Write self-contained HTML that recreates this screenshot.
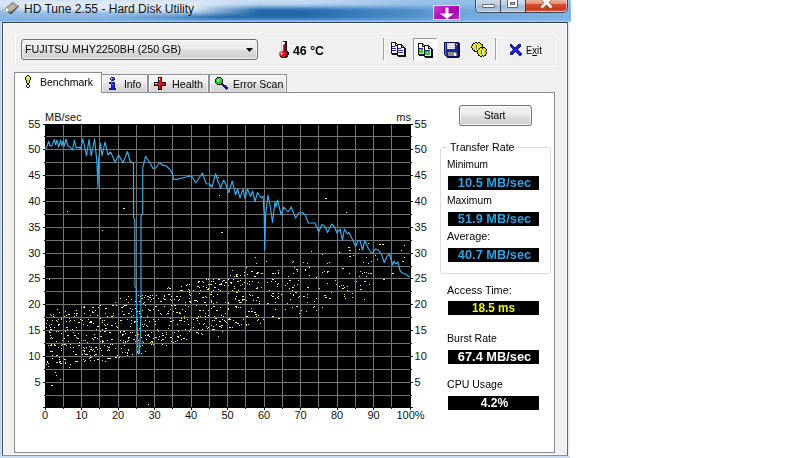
<!DOCTYPE html>
<html><head><meta charset="utf-8"><title>HD Tune 2.55 - Hard Disk Utility</title>
<style>
html,body{margin:0;padding:0;background:#fff;}
body{width:800px;height:458px;overflow:hidden;position:relative;font-family:"Liberation Sans",sans-serif;font-size:11px;color:#000;}
.abs,.t{position:absolute;}
.t{white-space:nowrap;line-height:1;transform-origin:0 0;}
#frame{left:0;top:0;width:571px;height:458px;background:linear-gradient(to right,#a9c4dc 0,#d6e8f8 1px,#d6e8f8 2px,#dfe9f6 3px,#dfe9f6 567px,#e4ebf8 568px,#e8eefa 569px,#f6f9fd 570px,#fff 571px);}
#titlebar{left:0;top:0;width:571px;height:22px;overflow:hidden;
 background:linear-gradient(to bottom,#c9dcf3 0px,#bdd5ef 4px,#7eaedc 6.5px,#2f74b5 9.5px,#1f66a8 12px,#2369ac 17px,#3f82c2 19px,#6da3d8 20.5px,#a8c8e8 21px,#a8c8e8 22px);}
#tb-r{left:300px;top:0;width:271px;height:21px;background:linear-gradient(to right,rgba(120,175,228,0) 0,rgba(120,175,228,.55) 110px,rgba(132,184,232,.8) 160px,rgba(140,190,236,.85) 271px);}
#tb-l{left:0;top:0;width:262px;height:17px;background:linear-gradient(to bottom,#d2e2f5 0,#dfeaf7 3px,#e1ebf8 9px,rgba(220,232,246,.9) 12px,rgba(200,220,242,.5) 14.5px,rgba(190,214,240,0) 17px);-webkit-mask-image:linear-gradient(to right,rgba(0,0,0,.8) 0,rgba(0,0,0,.85) 18px,#000 30px,#000 192px,rgba(0,0,0,.6) 215px,transparent 260px);}
#tb-l2{left:0;top:9px;width:225px;height:12px;background:linear-gradient(to bottom,rgba(150,190,232,0) 0,rgba(150,190,231,.9) 4.5px,#8ab7e4 8px,#82b1e1 11px,#80b0e0 12px);-webkit-mask-image:linear-gradient(to right,#000 0,#000 105px,rgba(0,0,0,.55) 170px,transparent 222px);}
#client{left:2px;top:22px;width:564px;height:432px;border:1px solid #3f4f63;border-top-color:#2b3c52;border-bottom-color:#8794a6;border-right-color:#5a6778;background:#f0f0f0;box-shadow:inset 0 0 0 1px #fbfcfd;}
#toolbar{left:15px;top:33px;width:539px;height:32px;border:1px solid #fbfbfb;border-radius:3px;box-shadow:inset 0 0 0 1px #ebebeb;}
#combo{left:21px;top:39px;width:235px;height:19px;border:1px solid #707070;border-radius:3px;background:linear-gradient(to bottom,#f2f2f2 0%,#ebebeb 48%,#dddddd 52%,#cfcfcf 100%);box-shadow:inset 0 0 0 1px rgba(255,255,255,.7);}
.sep{width:1px;background:#a0a0a0;box-shadow:1px 0 0 #fff;}
#panel{left:14px;top:92px;width:539px;height:359px;border:1px solid #898c95;background:#fff;}
.tab{top:74px;height:18px;border:1px solid #8e9097;border-bottom:none;background:linear-gradient(to bottom,#f4f4f4 0%,#ededed 48%,#e0e0e0 52%,#d4d4d4 100%);box-sizing:border-box;box-shadow:inset 1px 1px 0 rgba(255,255,255,.85),inset -1px 0 0 rgba(255,255,255,.6);}
#tab0{left:14px;top:72px;width:88px;height:21px;border:1px solid #898c95;border-bottom:none;background:#fff;box-sizing:border-box;}
.box{left:448px;width:91px;height:14px;background:#000;}
.val{font-weight:bold;font-size:13px;left:448px;width:91px;text-align:center;}
#start{left:459px;top:105px;width:71px;height:19px;border:1px solid #707070;border-radius:3px;background:linear-gradient(to bottom,#f2f2f2 0%,#ebebeb 48%,#dddddd 52%,#cfcfcf 100%);box-shadow:inset 0 0 0 1px rgba(255,255,255,.8);}
#group{left:440px;top:147px;width:109px;height:125px;border:1px solid #d9dde1;border-radius:3px;box-shadow:0 0 0 1px rgba(255,255,255,.6);}
</style></head><body>
<div id="frame" class="abs"></div>
<div id="titlebar" class="abs"></div>
<div id="tb-r" class="abs"></div><div id="tb-l" class="abs"></div><div id="tb-l2" class="abs"></div>
<div class="abs" style="left:0;top:456px;width:570px;height:2px;background:linear-gradient(to bottom,#d3e0f2,#c6d6ec)"></div>
<div id="client" class="abs"></div>

<!-- title -->
<svg class="abs" style="left:3px;top:1px" width="17" height="15" viewBox="0 0 17 15"><path d="M1 8.500L9.500 1 16 5.500 8 13.500z" fill="#4a5058"/><path d="M1.500 8L9.500 1.500 15 5.300 7.500 11.500z" fill="#a8a090"/><path d="M5 7.500L9.500 3.500 12.500 5.500 8 9.500z" fill="#c4b8a4"/><path d="M1.500 8.500l2.500-1.500 2 2.500-2 1.500z" fill="#f4f6f8"/></svg>
<span class="t" style="left:24px;top:3px;font-size:12px;color:#111">HD Tune 2.55 - Hard Disk Utility</span>

<!-- caption buttons -->
<div class="abs" style="left:433px;top:5px;width:27px;height:15px;background:linear-gradient(135deg,#d040d0 0%,#b010b4 45%,#a008a8 70%,#c030c4 100%);border:1px solid #f0d8f4;box-sizing:border-box;"></div>
<svg class="abs" style="left:438px;top:6px" width="18" height="13" viewBox="0 0 18 13"><path d="M7.500 1.500h3v6h5.500L9 13 2 7.500h5.500z" fill="#fff"/></svg>
<svg class="abs" style="left:474px;top:0" width="96" height="15" viewBox="0 0 96 15">
 <defs>
  <linearGradient id="gb" x1="0" y1="0" x2="0" y2="1"><stop offset="0" stop-color="#d3deed"/><stop offset=".45" stop-color="#b9cadf"/><stop offset=".5" stop-color="#a3b8d3"/><stop offset="1" stop-color="#b4c8e0"/></linearGradient>
  <linearGradient id="gr" x1="0" y1="0" x2="0" y2="1"><stop offset="0" stop-color="#f0baa9"/><stop offset=".36" stop-color="#e2917b"/><stop offset=".42" stop-color="#d2502f"/><stop offset=".8" stop-color="#c43a1c"/><stop offset="1" stop-color="#e08664"/></linearGradient>
 </defs>
 <path d="M1.500 -1V8.500a4 4 0 0 0 4 4H89.500a4 4 0 0 0 4-4V-1z" fill="url(#gb)" stroke="#3a4658" stroke-width="1"/>
 <path d="M51.500 -1V12H89.500a3.500 3.500 0 0 0 3.500-3.500V-1z" fill="url(#gr)"/>
 <path d="M2.500 0V8.500a3 3 0 0 0 3 3H89.500a3 3 0 0 0 3-3V0" fill="none" stroke="rgba(255,255,255,.45)" stroke-width="1"/>
 <path d="M26.500 0V12.500M51.500 0V12.500" stroke="#3a4658" stroke-width="1"/>
 <rect x="8.500" y="4.500" width="12" height="3" rx=".5" fill="#fff" stroke="#5a6a82" stroke-width="1"/>
 <path d="M33.500 -1h10v8.500h-10z" fill="#fff" stroke="#5a6a82" stroke-width="1"/><rect x="36.500" y="2.500" width="4" height="2" fill="#9fb3cf" stroke="#5a6a82" stroke-width="1"/>
 <path d="M67.500 -2.500l10 10M77.500 -2.500l-10 10" stroke="#8a3020" stroke-width="4.200" stroke-linecap="butt" opacity=".55"/>
 <path d="M67.500 -2.500l10 10M77.500 -2.500l-10 10" stroke="#fff" stroke-width="2.800" stroke-linecap="butt"/>
</svg>

<!-- toolbar -->
<div id="toolbar" class="abs"></div>
<div id="combo" class="abs"></div>
<span class="t" style="left:25px;top:44px;font-size:11px;transform:scaleX(.975)">FUJITSU MHY2250BH (250 GB)</span>
<svg class="abs" style="left:246px;top:48px" width="7" height="4" viewBox="0 0 7 4"><path d="M0 0h7L3.5 4z" fill="#111"/></svg>
<!-- thermometer -->
<svg class="abs" style="left:279px;top:41px" width="10" height="17" viewBox="0 0 10 17" shape-rendering="crispEdges"><path d="M3 0h1v1h-1zM2 1h1v1h-1zM2 2h1v1h-1zM2 3h1v1h-1zM2 4h1v1h-1zM2 5h1v1h-1zM2 6h1v1h-1zM2 7h1v1h-1zM2 8h1v1h-1zM2 9h1v1h-1z" fill="#c8c8c8"/><path d="M4 0h4v1h-4zM6 1h2v1h-2zM6 2h2v1h-2zM6 3h2v1h-2zM6 4h2v1h-2zM6 5h2v1h-2zM6 6h2v1h-2zM6 7h2v1h-2zM6 8h2v1h-2zM6 9h2v1h-2zM7 10h2v1h-2zM8 11h2v1h-2zM8 12h2v1h-2zM8 13h2v1h-2zM8 14h1v1h-1zM1 15h1v1h-1zM7 15h2v1h-2zM2 16h6v1h-6z" fill="#101018"/><path d="M3 1h2v1h-2zM3 2h2v1h-2zM3 3h1v1h-1zM3 4h1v1h-1zM3 5h1v1h-1zM3 6h1v1h-1zM3 7h1v1h-1zM3 8h1v1h-1zM2 12h2v1h-2zM2 13h1v1h-1z" fill="#ffffff"/><path d="M5 1h1v1h-1zM5 2h1v1h-1z" fill="#f4f4f4"/><path d="M4 3h1v1h-1zM3 9h1v1h-1zM2 10h1v1h-1zM1 11h1v1h-1z" fill="#f8b0b0"/><path d="M5 3h1v1h-1zM4 4h1v1h-1zM4 5h1v1h-1zM4 6h1v1h-1zM4 7h1v1h-1zM4 8h1v1h-1zM4 9h1v1h-1zM3 10h2v1h-2zM2 11h5v1h-5zM1 12h1v1h-1zM4 12h3v1h-3zM1 13h1v1h-1zM3 13h4v1h-4zM1 14h5v1h-5zM3 15h2v1h-2z" fill="#e01c2c"/><path d="M5 4h1v1h-1zM5 5h1v1h-1zM5 6h1v1h-1zM5 7h1v1h-1zM5 8h1v1h-1zM5 9h1v1h-1zM5 10h2v1h-2zM7 11h1v1h-1zM7 12h1v1h-1zM7 13h1v1h-1zM6 14h2v1h-2zM2 15h1v1h-1zM5 15h2v1h-2z" fill="#a00c18"/><path d="M1 10h1v1h-1zM0 11h1v1h-1zM0 12h1v1h-1zM0 13h1v1h-1zM0 14h1v1h-1z" fill="#8c8c8c"/></svg>
<span class="t" style="left:293px;top:45px;font-size:12px;font-weight:bold;transform:scaleX(1.03)">46 °C</span>
<div class="abs sep" style="left:383px;top:38px;height:22px"></div>
<!-- icons -->
<svg class="abs" style="left:391px;top:42px" width="16" height="15" viewBox="0 0 16 15" shape-rendering="crispEdges"><path d="M0 0h5v1h-5zM0 1h1v1h-1zM4 1h2v1h-2zM0 2h1v1h-1zM4 2h1v1h-1zM6 2h5v1h-5zM0 3h1v1h-1zM4 3h3v1h-3zM10 3h2v1h-2zM0 4h1v1h-1zM6 4h1v1h-1zM10 4h1v1h-1zM12 4h1v1h-1zM0 5h1v1h-1zM6 5h1v1h-1zM10 5h4v1h-4zM0 6h1v1h-1zM6 6h1v1h-1zM13 6h2v1h-2zM0 7h1v1h-1zM6 7h1v1h-1zM13 7h2v1h-2zM0 8h1v1h-1zM6 8h1v1h-1zM13 8h2v1h-2zM0 9h1v1h-1zM6 9h1v1h-1zM13 9h2v1h-2zM0 10h1v1h-1zM6 10h1v1h-1zM13 10h2v1h-2zM0 11h7v1h-7zM13 11h2v1h-2zM1 12h6v1h-6zM13 12h2v1h-2zM6 13h9v1h-9zM7 14h8v1h-8z" fill="#101018"/><path d="M1 1h3v1h-3zM1 2h3v1h-3zM5 2h1v1h-1zM1 3h3v1h-3zM7 3h3v1h-3zM4 4h2v1h-2zM7 4h3v1h-3zM11 4h1v1h-1zM1 5h5v1h-5zM7 5h3v1h-3zM5 6h1v1h-1zM10 6h3v1h-3zM1 7h5v1h-5zM7 7h6v1h-6zM5 8h1v1h-1zM12 8h1v1h-1zM1 9h5v1h-5zM7 9h6v1h-6zM1 10h5v1h-5zM12 10h1v1h-1zM7 11h6v1h-6zM7 12h6v1h-6z" fill="#ffffff"/><path d="M1 4h3v1h-3zM1 6h4v1h-4zM7 6h3v1h-3zM1 8h4v1h-4zM7 8h5v1h-5zM7 10h5v1h-5z" fill="#2a2ad0"/></svg>
<div class="abs" style="left:413px;top:38px;width:22px;height:21px;background:#f8f8f8;border-top:1px solid #9c9c9c;border-left:1px solid #9c9c9c;border-right:1px solid #fff;border-bottom:1px solid #fff;"></div>
<svg class="abs" style="left:418px;top:43px" width="16" height="15" viewBox="0 0 16 15" shape-rendering="crispEdges"><path d="M0 0h5v1h-5zM0 1h1v1h-1zM4 1h2v1h-2zM0 2h1v1h-1zM4 2h1v1h-1zM6 2h5v1h-5zM0 3h1v1h-1zM4 3h3v1h-3zM10 3h2v1h-2zM0 4h1v1h-1zM6 4h1v1h-1zM10 4h1v1h-1zM12 4h1v1h-1zM0 5h1v1h-1zM6 5h1v1h-1zM10 5h4v1h-4zM0 6h1v1h-1zM6 6h1v1h-1zM13 6h2v1h-2zM0 7h1v1h-1zM6 7h1v1h-1zM13 7h2v1h-2zM0 8h1v1h-1zM6 8h1v1h-1zM13 8h2v1h-2zM0 9h1v1h-1zM6 9h1v1h-1zM13 9h2v1h-2zM0 10h1v1h-1zM6 10h1v1h-1zM13 10h2v1h-2zM0 11h7v1h-7zM13 11h2v1h-2zM1 12h6v1h-6zM13 12h2v1h-2zM6 13h9v1h-9zM7 14h8v1h-8z" fill="#101018"/><path d="M1 1h3v1h-3zM1 2h3v1h-3zM5 2h1v1h-1zM1 3h3v1h-3zM7 3h3v1h-3zM1 4h5v1h-5zM7 4h3v1h-3zM11 4h1v1h-1zM5 5h1v1h-1zM7 5h3v1h-3zM5 6h1v1h-1zM7 6h6v1h-6zM5 7h1v1h-1zM12 7h1v1h-1zM5 8h1v1h-1zM12 8h1v1h-1zM5 9h1v1h-1zM12 9h1v1h-1zM1 10h5v1h-5zM12 10h1v1h-1zM12 11h1v1h-1zM7 12h6v1h-6z" fill="#ffffff"/><path d="M1 5h4v1h-4zM7 7h5v1h-5z" fill="#1a2a9c"/><path d="M1 6h4v1h-4zM1 7h1v1h-1zM3 7h2v1h-2zM1 8h4v1h-4zM7 8h5v1h-5zM1 9h4v1h-4zM7 9h2v1h-2zM10 9h2v1h-2zM7 10h5v1h-5zM7 11h5v1h-5z" fill="#30c838"/><path d="M2 7h1v1h-1zM9 9h1v1h-1z" fill="#a8e860"/></svg>
<svg class="abs" style="left:444px;top:42px" width="16" height="16" viewBox="0 0 16 16" shape-rendering="crispEdges"><path d="M0 0h15v1h-15zM0 1h1v1h-1zM14 1h1v1h-1zM0 2h1v1h-1zM14 2h1v1h-1zM0 3h1v1h-1zM14 3h1v1h-1zM0 4h1v1h-1zM14 4h1v1h-1zM0 5h1v1h-1zM14 5h1v1h-1zM0 6h1v1h-1zM14 6h1v1h-1zM0 7h1v1h-1zM14 7h1v1h-1zM0 8h1v1h-1zM14 8h1v1h-1zM0 9h1v1h-1zM14 9h1v1h-1zM0 10h1v1h-1zM14 10h1v1h-1zM0 11h1v1h-1zM14 11h1v1h-1zM0 12h1v1h-1zM14 12h1v1h-1zM1 13h1v1h-1zM14 13h1v1h-1zM2 14h13v1h-13z" fill="#101050"/><path d="M1 1h1v1h-1zM1 2h1v1h-1zM1 3h1v1h-1zM1 4h1v1h-1zM1 5h1v1h-1zM1 6h1v1h-1zM1 7h1v1h-1zM1 8h1v1h-1zM1 9h1v1h-1zM1 10h1v1h-1zM1 11h1v1h-1zM1 12h1v1h-1z" fill="#4a78e0"/><path d="M2 1h1v1h-1zM11 1h3v1h-3zM2 2h1v1h-1zM11 2h1v1h-1zM13 2h1v1h-1zM2 3h1v1h-1zM11 3h3v1h-3zM2 4h1v1h-1zM11 4h3v1h-3zM2 5h1v1h-1zM11 5h3v1h-3zM2 6h1v1h-1zM11 6h3v1h-3zM2 7h12v1h-12zM2 8h12v1h-12zM2 9h12v1h-12zM2 10h2v1h-2zM12 10h2v1h-2zM2 11h2v1h-2zM13 11h1v1h-1zM2 12h2v1h-2zM13 12h1v1h-1zM2 13h2v1h-2zM13 13h1v1h-1z" fill="#1a2a9c"/><path d="M3 1h8v1h-8zM3 2h1v1h-1zM10 2h1v1h-1zM3 3h8v1h-8zM3 4h1v1h-1zM10 4h1v1h-1zM3 5h8v1h-8zM3 6h1v1h-1zM10 6h1v1h-1z" fill="#c8c8c8"/><path d="M15 1h1v1h-1zM15 2h1v1h-1zM15 3h1v1h-1zM15 4h1v1h-1zM15 5h1v1h-1zM15 6h1v1h-1zM15 7h1v1h-1zM15 8h1v1h-1zM15 9h1v1h-1zM15 10h1v1h-1zM15 11h1v1h-1zM15 12h1v1h-1zM15 13h1v1h-1zM15 14h1v1h-1zM3 15h12v1h-12z" fill="#101018"/><path d="M4 2h6v1h-6zM12 2h1v1h-1zM4 4h6v1h-6zM4 6h6v1h-6zM10 11h2v1h-2zM10 12h2v1h-2zM10 13h2v1h-2z" fill="#ffffff"/><path d="M4 10h8v1h-8zM4 11h6v1h-6zM12 11h1v1h-1zM4 12h6v1h-6zM12 12h1v1h-1zM4 13h6v1h-6zM12 13h1v1h-1z" fill="#8c8c8c"/></svg>
<svg class="abs" style="left:471px;top:42px" width="16" height="15" viewBox="0 0 16 15" shape-rendering="crispEdges"><path d="M4 0h2v1h-2zM7 0h2v1h-2zM2 1h2v1h-2zM6 1h1v1h-1zM9 1h1v1h-1zM1 2h1v1h-1zM10 2h2v1h-2zM1 3h1v1h-1zM11 3h1v1h-1zM0 4h1v1h-1zM11 4h1v1h-1zM0 5h1v1h-1zM9 5h5v1h-5zM1 6h1v1h-1zM8 6h1v1h-1zM11 6h1v1h-1zM14 6h1v1h-1zM1 7h1v1h-1zM7 7h1v1h-1zM15 7h1v1h-1zM2 8h2v1h-2zM6 8h1v1h-1zM15 8h1v1h-1zM3 9h4v1h-4zM14 9h1v1h-1zM6 10h1v1h-1zM15 10h1v1h-1zM6 11h1v1h-1zM15 11h1v1h-1zM7 12h1v1h-1zM14 12h1v1h-1zM7 13h2v1h-2zM11 13h1v1h-1zM13 13h2v1h-2zM9 14h2v1h-2zM12 14h1v1h-1z" fill="#101018"/><path d="M4 1h2v1h-2zM7 1h2v1h-2zM2 2h1v1h-1zM4 2h6v1h-6zM2 3h3v1h-3zM7 3h4v1h-4zM1 4h1v1h-1zM3 4h2v1h-2zM7 4h4v1h-4zM1 5h4v1h-4zM7 5h2v1h-2zM2 6h3v1h-3zM7 6h1v1h-1zM9 6h2v1h-2zM12 6h2v1h-2zM2 7h5v1h-5zM8 7h1v1h-1zM10 7h5v1h-5zM4 8h2v1h-2zM7 8h3v1h-3zM12 8h3v1h-3zM7 9h1v1h-1zM9 9h1v1h-1zM12 9h2v1h-2zM7 10h3v1h-3zM12 10h3v1h-3zM7 11h3v1h-3zM12 11h3v1h-3zM8 12h6v1h-6zM9 13h2v1h-2zM12 13h1v1h-1z" fill="#e4e020"/><path d="M3 2h1v1h-1zM2 4h1v1h-1zM9 7h1v1h-1zM8 9h1v1h-1z" fill="#f6f680"/><path d="M5 3h1v1h-1zM5 4h1v1h-1zM5 5h1v1h-1zM5 6h1v1h-1zM10 8h1v1h-1zM10 9h1v1h-1zM10 10h1v1h-1zM10 11h1v1h-1z" fill="#606060"/><path d="M6 3h1v1h-1zM6 4h1v1h-1zM6 5h1v1h-1zM6 6h1v1h-1zM11 8h1v1h-1zM11 9h1v1h-1zM11 10h1v1h-1zM11 11h1v1h-1z" fill="#f4f4f4"/></svg>
<div class="abs sep" style="left:495px;top:38px;height:22px"></div>
<svg class="abs" style="left:510px;top:44px" width="12" height="12" viewBox="0 0 12 12" shape-rendering="crispEdges"><path d="M0 0h2v1h-2zM8 0h3v1h-3zM0 1h1v1h-1zM2 1h1v1h-1zM7 1h1v1h-1zM10 1h1v1h-1zM0 2h1v1h-1zM3 2h1v1h-1zM6 2h1v1h-1zM10 2h1v1h-1zM1 3h1v1h-1zM4 3h2v1h-2zM9 3h1v1h-1zM2 4h1v1h-1zM8 4h1v1h-1zM3 5h1v1h-1zM7 5h1v1h-1zM2 6h1v1h-1zM8 6h1v1h-1zM1 7h1v1h-1zM5 7h1v1h-1zM9 7h1v1h-1zM0 8h1v1h-1zM4 8h1v1h-1zM6 8h1v1h-1zM10 8h1v1h-1zM0 9h1v1h-1zM3 9h1v1h-1zM7 9h1v1h-1zM11 9h1v1h-1zM0 10h3v1h-3zM8 10h1v1h-1zM11 10h1v1h-1zM9 11h2v1h-2z" fill="#1c1c70"/><path d="M1 1h1v1h-1zM8 1h2v1h-2zM1 2h2v1h-2zM7 2h3v1h-3zM2 3h2v1h-2zM6 3h3v1h-3zM3 4h5v1h-5zM4 5h3v1h-3zM3 6h5v1h-5zM2 7h3v1h-3zM6 7h3v1h-3zM1 8h3v1h-3zM7 8h3v1h-3zM1 9h2v1h-2zM8 9h3v1h-3zM9 10h2v1h-2z" fill="#2020e8"/></svg>
<span class="t" style="left:526px;top:45px;font-size:11px;transform:scaleX(.86)">E<u>x</u>it</span>

<!-- tabs -->
<div id="panel" class="abs"></div>
<div class="abs tab" style="left:101px;width:47px"></div>
<div class="abs tab" style="left:148px;width:61px"></div>
<div class="abs tab" style="left:209px;width:78px"></div>
<div id="tab0" class="abs"></div>
<svg class="abs" style="left:25px;top:75px" width="6" height="13" viewBox="0 0 6 13" shape-rendering="crispEdges"><path d="M2 0h2v1h-2zM1 1h1v1h-1zM4 1h1v1h-1zM0 2h1v1h-1zM5 2h1v1h-1zM0 3h1v1h-1zM5 3h1v1h-1zM0 4h1v1h-1zM5 4h1v1h-1zM1 5h1v1h-1zM4 5h1v1h-1zM1 6h1v1h-1zM4 6h1v1h-1zM1 7h1v1h-1zM4 7h1v1h-1zM2 8h2v1h-2zM2 9h2v1h-2zM1 10h1v1h-1zM4 10h1v1h-1zM1 11h1v1h-1zM4 11h1v1h-1zM2 12h2v1h-2z" fill="#101018"/><path d="M2 1h1v1h-1zM2 2h1v1h-1zM2 3h1v1h-1zM2 4h1v1h-1z" fill="#f6f680"/><path d="M3 1h1v1h-1zM1 2h1v1h-1zM3 2h2v1h-2zM1 3h1v1h-1zM3 3h2v1h-2zM1 4h1v1h-1zM3 4h2v1h-2zM2 5h2v1h-2zM2 6h2v1h-2zM2 7h2v1h-2z" fill="#e4e020"/><path d="M2 10h2v1h-2zM2 11h2v1h-2z" fill="#ffffff"/></svg>
<span class="t" style="left:40px;top:77px;transform:scaleX(.953)">Benchmark</span>
<svg class="abs" style="left:109px;top:77px" width="7" height="13" viewBox="0 0 7 13" shape-rendering="crispEdges"><path d="M2 0h3v1h-3zM1 1h1v1h-1zM5 1h1v1h-1zM1 2h1v1h-1zM5 2h1v1h-1zM2 3h3v1h-3zM0 5h6v1h-6zM0 6h2v1h-2zM5 6h1v1h-1zM2 7h1v1h-1zM5 7h1v1h-1zM2 8h1v1h-1zM5 8h1v1h-1zM2 9h1v1h-1zM5 9h1v1h-1zM2 10h1v1h-1zM5 10h1v1h-1zM0 11h3v1h-3zM5 11h2v1h-2zM0 12h7v1h-7z" fill="#1c1c70"/><path d="M2 1h1v1h-1z" fill="#d8dcf8"/><path d="M3 1h1v1h-1zM2 2h1v1h-1zM2 6h1v1h-1zM3 7h1v1h-1z" fill="#7080f0"/><path d="M4 1h1v1h-1zM3 2h2v1h-2zM3 6h2v1h-2zM4 7h1v1h-1zM3 8h2v1h-2zM3 9h2v1h-2zM3 10h2v1h-2zM3 11h2v1h-2z" fill="#2020e8"/></svg>
<span class="t" style="left:124px;top:79px;transform:scaleX(.94)">Info</span>
<svg class="abs" style="left:154px;top:77px" width="12" height="13" viewBox="0 0 12 13" shape-rendering="crispEdges"><path d="M4 0h4v1h-4zM4 1h1v1h-1zM7 1h1v1h-1zM4 2h1v1h-1zM7 2h1v1h-1zM4 3h1v1h-1zM7 3h1v1h-1zM4 4h1v1h-1zM7 4h1v1h-1zM0 5h5v1h-5zM7 5h5v1h-5zM0 6h1v1h-1zM11 6h1v1h-1zM0 7h1v1h-1zM11 7h1v1h-1zM0 8h5v1h-5zM7 8h5v1h-5zM4 9h1v1h-1zM7 9h1v1h-1zM4 10h1v1h-1zM7 10h1v1h-1zM4 11h1v1h-1zM7 11h1v1h-1zM4 12h4v1h-4z" fill="#101018"/><path d="M5 1h1v1h-1zM5 2h1v1h-1zM1 6h2v1h-2z" fill="#ffffff"/><path d="M6 1h1v1h-1zM6 2h1v1h-1zM5 3h2v1h-2zM5 4h2v1h-2zM5 5h2v1h-2zM3 6h8v1h-8zM1 7h8v1h-8zM5 8h1v1h-1zM5 9h1v1h-1zM5 10h1v1h-1zM5 11h1v1h-1z" fill="#e01c2c"/><path d="M9 7h2v1h-2zM6 8h1v1h-1zM6 9h1v1h-1zM6 10h1v1h-1zM6 11h1v1h-1z" fill="#a00c18"/></svg>
<span class="t" style="left:172px;top:79px;transform:scaleX(.975)">Health</span>
<svg class="abs" style="left:215px;top:77px" width="13" height="13" viewBox="0 0 13 13" shape-rendering="crispEdges"><path d="M2 0h4v1h-4zM1 1h1v1h-1zM6 1h1v1h-1zM0 2h1v1h-1zM7 2h1v1h-1zM0 3h1v1h-1zM7 3h1v1h-1zM0 4h1v1h-1zM7 4h1v1h-1zM0 5h1v1h-1zM7 5h1v1h-1zM1 6h1v1h-1zM6 6h1v1h-1zM2 7h4v1h-4z" fill="#101018"/><path d="M2 1h4v1h-4zM1 2h2v1h-2zM5 2h2v1h-2zM1 3h1v1h-1zM5 3h2v1h-2zM1 4h2v1h-2zM4 4h3v1h-3zM1 5h6v1h-6zM2 6h4v1h-4z" fill="#30c838"/><path d="M3 2h2v1h-2zM2 3h3v1h-3zM3 4h1v1h-1z" fill="#a8e860"/><path d="M7 6h1v1h-1zM6 7h3v1h-3zM7 8h4v1h-4zM8 9h4v1h-4zM9 10h4v1h-4zM10 11h3v1h-3zM11 12h1v1h-1z" fill="#1c1c70"/></svg>
<span class="t" style="left:233px;top:79px;transform:scaleX(.957)">Error Scan</span>

<svg class="chart" width="440" height="330" viewBox="0 100 440 330" style="position:absolute;left:0;top:100px" shape-rendering="crispEdges">
<rect x="45" y="124" width="366" height="284" fill="#000"/>
<path d="M164 306h1v1h-1zM179 312h1v1h-1zM59 362h1v1h-1zM347 290h1v1h-1zM256 263h1v1h-1zM151 341h2v1h-2zM158 339h1v1h-1zM181 339h1v1h-1zM67 329h1v1h-1zM259 303h1v1h-1zM135 321h1v1h-1zM151 344h1v1h-1zM198 329h1v1h-1zM160 313h1v1h-1zM257 272h2v1h-2zM288 276h1v1h-1zM186 339h1v1h-1zM88 319h1v1h-1zM93 339h1v1h-1zM209 284h2v1h-2zM147 326h1v1h-1zM101 350h1v1h-1zM131 320h1v1h-1zM198 304h1v1h-1zM234 286h1v1h-1zM337 282h1v1h-1zM83 359h1v1h-1zM105 356h1v1h-1zM46 364h1v1h-1zM100 341h1v1h-1zM178 291h1v1h-1zM222 325h1v1h-1zM171 296h1v1h-1zM99 359h1v1h-1zM238 278h1v1h-1zM179 299h1v1h-1zM240 307h1v1h-1zM316 277h1v1h-1zM175 341h1v1h-1zM209 277h1v1h-1zM126 343h1v1h-1zM221 283h1v1h-1zM76 313h2v1h-2zM220 290h1v1h-1zM167 291h1v1h-1zM108 349h1v1h-1zM99 306h1v1h-1zM246 325h1v1h-1zM238 300h1v1h-1zM123 342h1v1h-1zM133 339h2v1h-2zM213 281h1v1h-1zM199 310h2v1h-2zM52 358h1v1h-1zM47 362h1v1h-1zM249 294h1v1h-1zM84 350h1v1h-1zM231 283h1v1h-1zM269 290h1v1h-1zM240 275h1v1h-1zM352 297h1v1h-1zM133 315h1v1h-1zM102 320h1v1h-1zM223 280h2v1h-2zM104 331h2v1h-2zM162 344h1v1h-1zM248 324h1v1h-1zM232 270h1v1h-1zM84 361h1v1h-1zM93 312h1v1h-1zM344 294h1v1h-1zM301 310h1v1h-1zM72 329h1v1h-1zM358 253h1v1h-1zM211 301h1v1h-1zM93 349h1v1h-1zM85 360h1v1h-1zM157 329h1v1h-1zM228 308h1v1h-1zM51 337h1v1h-1zM115 302h1v1h-1zM203 286h1v1h-1zM189 298h1v1h-1zM278 298h1v1h-1zM65 363h1v1h-1zM105 313h1v1h-1zM148 334h1v1h-1zM208 279h2v1h-2zM135 335h2v1h-2zM185 311h1v1h-1zM119 357h1v1h-1zM191 336h1v1h-1zM157 317h1v1h-1zM165 337h1v1h-1zM61 318h1v1h-1zM342 278h2v1h-2zM230 282h2v1h-2zM299 313h1v1h-1zM94 355h1v1h-1zM275 281h1v1h-1zM224 285h1v1h-1zM241 324h1v1h-1zM314 306h1v1h-1zM120 298h1v1h-1zM226 304h1v1h-1zM271 317h1v1h-1zM99 319h1v1h-1zM50 351h1v1h-1zM292 287h2v1h-2zM89 351h1v1h-1zM52 320h1v1h-1zM144 297h1v1h-1zM122 352h1v1h-1zM94 334h1v1h-1zM130 326h1v1h-1zM225 313h1v1h-1zM97 343h1v1h-1zM89 322h2v1h-2zM181 286h1v1h-1zM202 334h1v1h-1zM83 347h1v1h-1zM142 341h1v1h-1zM182 290h1v1h-1zM246 324h1v1h-1zM150 295h1v1h-1zM171 300h2v1h-2zM285 285h1v1h-1zM105 308h1v1h-1zM227 276h1v1h-1zM96 356h2v1h-2zM170 330h2v1h-2zM196 305h1v1h-1zM183 338h2v1h-2zM91 322h1v1h-1zM360 285h1v1h-1zM208 284h1v1h-1zM364 299h1v1h-1zM218 336h1v1h-1zM188 289h1v1h-1zM136 347h1v1h-1zM236 274h2v1h-2zM247 283h1v1h-1zM130 317h2v1h-2zM137 311h1v1h-1zM86 335h1v1h-1zM127 355h1v1h-1zM156 295h1v1h-1zM219 321h2v1h-2zM158 319h1v1h-1zM139 301h2v1h-2zM128 338h1v1h-1zM118 314h1v1h-1zM230 275h1v1h-1zM130 308h1v1h-1zM153 319h1v1h-1zM198 282h1v1h-1zM99 348h2v1h-2zM64 344h2v1h-2zM113 313h1v1h-1zM184 321h1v1h-1zM107 346h1v1h-1zM91 347h1v1h-1zM176 296h2v1h-2zM218 279h2v1h-2zM116 305h1v1h-1zM60 363h2v1h-2zM169 291h2v1h-2zM307 297h1v1h-1zM47 320h1v1h-1zM54 344h1v1h-1zM187 319h1v1h-1zM112 316h1v1h-1zM267 303h1v1h-1zM74 320h1v1h-1zM136 352h2v1h-2zM76 337h1v1h-1zM131 320h1v1h-1zM90 349h2v1h-2zM252 281h1v1h-1zM135 301h1v1h-1zM257 297h2v1h-2zM130 317h2v1h-2zM219 284h2v1h-2zM153 338h1v1h-1zM140 296h1v1h-1zM272 296h2v1h-2zM97 349h1v1h-1zM120 340h1v1h-1zM293 295h1v1h-1zM246 316h2v1h-2zM190 302h1v1h-1zM299 296h1v1h-1zM158 331h1v1h-1zM198 281h2v1h-2zM178 300h1v1h-1zM105 328h2v1h-2zM78 345h2v1h-2zM149 297h2v1h-2zM85 317h1v1h-1zM92 307h2v1h-2zM222 281h1v1h-1zM104 345h1v1h-1zM193 290h1v1h-1zM191 315h1v1h-1zM90 321h2v1h-2zM59 361h1v1h-1zM264 285h1v1h-1zM258 282h1v1h-1zM209 334h1v1h-1zM131 311h1v1h-1zM213 306h2v1h-2zM203 310h1v1h-1zM232 290h1v1h-1zM65 344h1v1h-1zM116 326h1v1h-1zM106 308h1v1h-1zM69 321h1v1h-1zM146 339h1v1h-1zM229 318h1v1h-1zM162 333h1v1h-1zM104 320h1v1h-1zM332 278h1v1h-1zM278 270h1v1h-1zM368 243h1v1h-1zM275 273h1v1h-1zM256 273h2v1h-2zM207 289h2v1h-2zM138 295h1v1h-1zM259 303h1v1h-1zM100 336h2v1h-2zM233 320h1v1h-1zM54 345h2v1h-2zM84 353h1v1h-1zM120 331h1v1h-1zM95 347h2v1h-2zM331 292h1v1h-1zM50 338h1v1h-1zM207 291h1v1h-1zM136 352h2v1h-2zM132 309h1v1h-1zM50 314h1v1h-1zM267 282h1v1h-1zM342 288h2v1h-2zM307 263h1v1h-1zM128 340h1v1h-1zM143 326h1v1h-1zM142 295h1v1h-1zM51 351h2v1h-2zM318 260h1v1h-1zM158 310h1v1h-1zM74 356h2v1h-2zM97 359h1v1h-1zM70 344h1v1h-1zM371 252h1v1h-1zM85 354h1v1h-1zM150 342h1v1h-1zM322 291h1v1h-1zM139 311h1v1h-1zM180 290h2v1h-2zM271 295h1v1h-1zM205 316h1v1h-1zM125 352h1v1h-1zM345 304h1v1h-1zM402 261h2v1h-2zM225 321h1v1h-1zM349 250h2v1h-2zM149 310h2v1h-2zM278 272h1v1h-1zM275 298h1v1h-1zM77 361h1v1h-1zM121 307h2v1h-2zM368 273h1v1h-1zM240 285h1v1h-1zM165 299h1v1h-1zM107 316h1v1h-1zM214 320h1v1h-1zM115 317h1v1h-1zM102 342h1v1h-1zM236 307h1v1h-1zM311 251h1v1h-1zM83 307h2v1h-2zM204 302h2v1h-2zM85 340h1v1h-1zM228 303h1v1h-1zM97 338h1v1h-1zM202 297h2v1h-2zM199 293h1v1h-1zM211 300h1v1h-1zM81 320h2v1h-2zM137 329h1v1h-1zM272 279h2v1h-2zM187 284h1v1h-1zM59 357h1v1h-1zM235 299h1v1h-1zM243 299h2v1h-2zM236 276h2v1h-2zM122 334h2v1h-2zM66 345h1v1h-1zM50 345h2v1h-2zM142 310h1v1h-1zM125 333h1v1h-1zM277 284h1v1h-1zM128 337h2v1h-2zM153 344h1v1h-1zM356 281h1v1h-1zM113 315h1v1h-1zM148 334h1v1h-1zM278 296h1v1h-1zM66 315h1v1h-1zM51 315h1v1h-1zM285 309h1v1h-1zM329 298h1v1h-1zM107 324h1v1h-1zM352 266h1v1h-1zM239 300h1v1h-1zM142 345h1v1h-1zM225 302h1v1h-1zM227 279h1v1h-1zM48 345h1v1h-1zM198 333h1v1h-1zM278 318h2v1h-2zM222 331h1v1h-1zM169 325h1v1h-1zM327 283h1v1h-1zM200 290h1v1h-1zM193 319h1v1h-1zM230 291h1v1h-1zM161 314h1v1h-1zM60 317h2v1h-2zM155 337h2v1h-2zM271 281h1v1h-1zM123 331h2v1h-2zM324 295h1v1h-1zM180 296h1v1h-1zM251 308h1v1h-1zM203 282h1v1h-1zM65 362h1v1h-1zM208 310h1v1h-1zM196 300h1v1h-1zM51 329h1v1h-1zM90 357h2v1h-2zM52 355h1v1h-1zM313 307h1v1h-1zM76 327h1v1h-1zM214 316h1v1h-1zM50 332h1v1h-1zM344 287h1v1h-1zM67 335h1v1h-1zM206 326h1v1h-1zM281 294h1v1h-1zM186 285h1v1h-1zM152 295h1v1h-1zM167 288h1v1h-1zM158 298h1v1h-1zM183 304h1v1h-1zM149 336h1v1h-1zM200 290h1v1h-1zM145 305h1v1h-1zM172 311h2v1h-2zM131 316h1v1h-1zM215 318h2v1h-2zM213 290h1v1h-1zM327 272h1v1h-1zM236 296h1v1h-1zM115 348h1v1h-1zM252 295h1v1h-1zM100 305h1v1h-1zM102 340h1v1h-1zM235 322h2v1h-2zM223 316h1v1h-1zM138 340h1v1h-1zM64 316h1v1h-1zM213 279h1v1h-1zM191 283h1v1h-1zM139 313h1v1h-1zM189 331h1v1h-1zM126 343h2v1h-2zM63 323h1v1h-1zM66 321h1v1h-1zM155 306h2v1h-2zM84 348h1v1h-1zM107 350h1v1h-1zM293 273h1v1h-1zM370 273h2v1h-2zM81 318h1v1h-1zM170 318h1v1h-1zM275 302h1v1h-1zM247 274h1v1h-1zM143 342h1v1h-1zM168 313h1v1h-1zM162 339h2v1h-2zM123 340h1v1h-1zM140 324h1v1h-1zM383 279h2v1h-2zM373 258h1v1h-1zM51 344h1v1h-1zM97 315h1v1h-1zM204 323h1v1h-1zM254 312h2v1h-2zM117 355h1v1h-1zM268 303h1v1h-1zM258 315h1v1h-1zM313 266h1v1h-1zM168 294h2v1h-2zM225 282h2v1h-2zM143 303h1v1h-1zM179 320h1v1h-1zM235 298h1v1h-1zM90 315h1v1h-1zM305 270h1v1h-1zM68 314h2v1h-2zM239 325h1v1h-1zM112 344h1v1h-1zM81 354h2v1h-2zM52 338h1v1h-1zM83 324h1v1h-1zM62 340h1v1h-1zM90 355h1v1h-1zM99 317h1v1h-1zM199 304h1v1h-1zM190 295h1v1h-1zM168 287h1v1h-1zM65 311h1v1h-1zM200 316h1v1h-1zM239 302h2v1h-2zM96 317h1v1h-1zM368 263h1v1h-1zM145 295h1v1h-1zM272 293h2v1h-2zM150 310h1v1h-1zM89 310h1v1h-1zM216 324h1v1h-1zM91 347h1v1h-1zM134 321h1v1h-1zM254 312h2v1h-2zM246 300h1v1h-1zM159 336h1v1h-1zM259 301h1v1h-1zM360 271h1v1h-1zM327 304h1v1h-1zM68 341h1v1h-1zM128 313h2v1h-2zM102 341h2v1h-2zM234 288h1v1h-1zM379 244h2v1h-2zM259 266h1v1h-1zM254 276h2v1h-2zM184 316h1v1h-1zM309 291h1v1h-1zM163 298h1v1h-1zM228 319h2v1h-2zM256 316h1v1h-1zM201 333h1v1h-1zM227 285h2v1h-2zM242 299h1v1h-1zM188 306h1v1h-1zM174 305h2v1h-2zM182 309h1v1h-1zM206 279h1v1h-1zM343 285h1v1h-1zM233 279h1v1h-1zM199 323h1v1h-1zM232 317h1v1h-1zM266 261h1v1h-1zM278 293h1v1h-1zM298 297h1v1h-1zM289 288h1v1h-1zM282 260h1v1h-1zM255 314h2v1h-2zM84 351h1v1h-1zM236 292h2v1h-2zM50 351h1v1h-1zM307 302h1v1h-1zM173 320h1v1h-1zM65 331h1v1h-1zM272 316h2v1h-2zM160 301h2v1h-2zM188 324h1v1h-1zM158 319h1v1h-1zM109 350h1v1h-1zM250 295h1v1h-1zM69 318h1v1h-1zM174 332h1v1h-1zM58 347h1v1h-1zM102 355h1v1h-1zM92 311h1v1h-1zM339 286h1v1h-1zM128 349h1v1h-1zM303 262h1v1h-1zM135 341h1v1h-1zM364 272h1v1h-1zM327 271h2v1h-2zM253 300h1v1h-1zM287 283h1v1h-1zM177 324h1v1h-1zM128 313h2v1h-2zM149 297h2v1h-2zM360 289h2v1h-2zM56 331h1v1h-1zM136 331h1v1h-1zM275 309h1v1h-1zM306 311h1v1h-1zM105 343h1v1h-1zM159 336h1v1h-1zM307 287h2v1h-2zM46 327h1v1h-1zM150 301h1v1h-1zM135 308h1v1h-1zM122 311h1v1h-1zM189 290h1v1h-1zM148 299h1v1h-1zM211 292h1v1h-1zM202 281h1v1h-1zM61 319h1v1h-1zM141 298h2v1h-2zM137 334h2v1h-2zM196 318h2v1h-2zM290 299h1v1h-1zM234 276h1v1h-1zM368 266h1v1h-1zM167 313h1v1h-1zM214 287h2v1h-2zM87 342h1v1h-1zM148 309h1v1h-1zM209 317h2v1h-2zM107 358h2v1h-2zM76 310h1v1h-1zM224 320h1v1h-1zM244 275h1v1h-1zM137 346h1v1h-1zM56 320h1v1h-1zM316 298h1v1h-1zM180 320h2v1h-2zM61 333h1v1h-1zM226 322h1v1h-1zM75 354h2v1h-2zM207 328h1v1h-1zM115 357h2v1h-2zM149 321h1v1h-1zM206 287h1v1h-1zM153 317h1v1h-1zM77 338h1v1h-1zM342 268h2v1h-2zM221 315h1v1h-1zM171 341h1v1h-1zM209 294h2v1h-2zM181 320h1v1h-1zM190 329h1v1h-1zM86 347h1v1h-1zM137 319h1v1h-1zM128 350h1v1h-1zM75 361h2v1h-2zM206 304h1v1h-1zM87 325h1v1h-1zM83 340h1v1h-1zM95 354h1v1h-1zM132 354h1v1h-1zM155 324h1v1h-1zM107 340h1v1h-1zM347 286h1v1h-1zM309 275h1v1h-1zM339 252h1v1h-1zM292 307h1v1h-1zM258 319h1v1h-1zM86 354h2v1h-2zM296 306h2v1h-2zM392 273h2v1h-2zM58 319h1v1h-1zM294 285h1v1h-1zM189 301h2v1h-2zM73 351h1v1h-1zM61 348h1v1h-1zM216 310h2v1h-2zM257 320h1v1h-1zM213 329h2v1h-2zM145 320h1v1h-1zM141 316h1v1h-1zM58 325h1v1h-1zM277 297h1v1h-1zM294 267h1v1h-1zM277 286h1v1h-1zM169 288h2v1h-2zM221 317h1v1h-1zM95 310h1v1h-1zM211 302h1v1h-1zM70 347h1v1h-1zM75 330h1v1h-1zM362 273h1v1h-1zM140 343h2v1h-2zM125 341h1v1h-1zM282 272h1v1h-1zM74 316h1v1h-1zM170 337h2v1h-2zM123 314h2v1h-2zM282 278h1v1h-1zM197 301h1v1h-1zM168 311h1v1h-1zM50 335h1v1h-1zM166 334h1v1h-1zM78 338h1v1h-1zM242 296h2v1h-2zM166 332h1v1h-1zM329 262h1v1h-1zM147 296h2v1h-2zM94 337h1v1h-1zM178 331h1v1h-1zM322 307h1v1h-1zM229 319h1v1h-1zM100 318h1v1h-1zM56 355h2v1h-2zM278 273h1v1h-1zM375 255h1v1h-1zM69 343h1v1h-1zM251 271h2v1h-2zM127 341h1v1h-1zM120 320h2v1h-2zM154 336h1v1h-1zM143 304h2v1h-2zM149 321h1v1h-1zM211 284h1v1h-1zM122 335h1v1h-1zM112 305h2v1h-2zM154 341h1v1h-1zM314 301h1v1h-1zM295 292h2v1h-2zM58 324h2v1h-2zM297 284h1v1h-1zM84 306h1v1h-1zM161 340h1v1h-1zM202 297h1v1h-1zM99 331h2v1h-2zM227 309h2v1h-2zM124 305h2v1h-2zM110 356h1v1h-1zM61 345h1v1h-1zM49 332h1v1h-1zM244 282h1v1h-1zM307 294h1v1h-1zM198 316h1v1h-1zM98 359h1v1h-1zM138 330h1v1h-1zM88 317h1v1h-1zM377 259h1v1h-1zM246 267h1v1h-1zM46 323h1v1h-1zM184 318h1v1h-1zM238 290h1v1h-1zM244 288h2v1h-2zM142 324h1v1h-1zM219 326h2v1h-2zM237 281h2v1h-2zM61 319h1v1h-1zM344 296h1v1h-1zM176 312h2v1h-2zM211 308h1v1h-1zM209 289h1v1h-1zM322 272h1v1h-1zM132 332h1v1h-1zM185 329h1v1h-1zM111 343h1v1h-1zM164 296h1v1h-1zM359 276h1v1h-1zM181 318h1v1h-1zM153 309h2v1h-2zM186 285h1v1h-1zM305 269h1v1h-1zM166 304h2v1h-2zM227 285h1v1h-1zM55 345h1v1h-1zM197 286h2v1h-2zM206 305h1v1h-1zM316 310h1v1h-1zM89 358h1v1h-1zM78 333h1v1h-1zM66 327h2v1h-2zM298 280h1v1h-1zM364 281h2v1h-2zM141 337h1v1h-1zM232 327h1v1h-1zM139 345h1v1h-1zM241 302h1v1h-1zM179 330h1v1h-1zM64 338h1v1h-1zM164 299h2v1h-2zM152 304h1v1h-1zM366 276h1v1h-1zM279 266h2v1h-2zM111 325h2v1h-2zM153 298h1v1h-1zM121 348h1v1h-1zM197 320h1v1h-1zM102 322h1v1h-1zM61 350h1v1h-1zM162 335h2v1h-2zM353 255h1v1h-1zM58 331h1v1h-1zM127 352h1v1h-1zM202 329h1v1h-1zM348 247h2v1h-2zM238 307h1v1h-1zM385 266h2v1h-2zM243 319h1v1h-1zM144 302h1v1h-1zM57 309h1v1h-1zM171 305h2v1h-2zM210 291h1v1h-1zM111 339h2v1h-2zM80 319h1v1h-1zM263 319h2v1h-2zM282 284h1v1h-1zM174 304h1v1h-1zM221 325h2v1h-2zM366 272h1v1h-1zM216 302h1v1h-1zM230 319h1v1h-1zM92 312h2v1h-2zM229 327h2v1h-2zM297 271h1v1h-1zM102 360h1v1h-1zM152 342h1v1h-1zM257 287h1v1h-1zM68 335h1v1h-1zM404 257h1v1h-1zM170 321h2v1h-2zM382 244h2v1h-2zM78 322h2v1h-2zM293 294h1v1h-1zM126 299h1v1h-1zM221 284h1v1h-1zM278 283h1v1h-1zM79 342h1v1h-1zM95 304h1v1h-1zM261 273h2v1h-2zM155 321h1v1h-1zM391 239h1v1h-1zM352 293h1v1h-1zM213 303h1v1h-1zM305 269h1v1h-1zM194 300h2v1h-2zM335 280h1v1h-1zM51 324h1v1h-1zM212 320h1v1h-1zM175 308h1v1h-1zM144 324h1v1h-1zM90 360h1v1h-1zM145 331h1v1h-1zM127 319h1v1h-1zM228 302h1v1h-1zM349 273h1v1h-1zM341 285h1v1h-1zM82 317h1v1h-1zM289 280h2v1h-2zM208 315h1v1h-1zM183 304h1v1h-1zM178 337h1v1h-1zM249 284h1v1h-1zM319 288h1v1h-1zM371 261h1v1h-1zM256 300h1v1h-1zM148 335h1v1h-1zM244 272h2v1h-2zM292 262h1v1h-1zM147 316h1v1h-1zM172 317h2v1h-2zM366 257h1v1h-1zM65 343h1v1h-1zM114 304h1v1h-1zM205 319h1v1h-1zM189 284h1v1h-1zM330 298h1v1h-1zM249 281h1v1h-1zM151 332h1v1h-1zM327 263h1v1h-1zM134 322h1v1h-1zM196 332h2v1h-2zM189 294h1v1h-1zM170 299h1v1h-1zM236 275h1v1h-1zM94 360h1v1h-1zM256 288h2v1h-2zM145 305h1v1h-1zM228 279h1v1h-1zM93 323h1v1h-1zM70 320h1v1h-1zM145 335h1v1h-1zM177 336h2v1h-2zM47 361h1v1h-1zM208 288h1v1h-1zM60 361h1v1h-1zM170 309h1v1h-1zM125 342h1v1h-1zM242 284h1v1h-1zM56 341h1v1h-1zM192 304h1v1h-1zM128 296h1v1h-1zM166 345h1v1h-1zM220 307h1v1h-1zM211 325h1v1h-1zM193 327h1v1h-1zM206 297h1v1h-1zM117 327h1v1h-1zM308 304h2v1h-2zM50 329h1v1h-1zM175 308h1v1h-1zM62 344h1v1h-1zM212 329h1v1h-1zM102 329h1v1h-1zM345 298h1v1h-1zM251 311h2v1h-2zM205 313h1v1h-1zM94 351h1v1h-1zM49 325h1v1h-1zM215 283h1v1h-1zM164 295h1v1h-1zM222 319h1v1h-1zM185 302h1v1h-1zM92 338h1v1h-1zM70 364h1v1h-1zM217 294h1v1h-1zM283 291h2v1h-2zM97 326h2v1h-2zM189 292h1v1h-1zM59 312h1v1h-1zM63 314h1v1h-1zM126 305h1v1h-1zM141 353h1v1h-1zM322 254h1v1h-1zM340 278h2v1h-2zM84 313h1v1h-1zM272 273h2v1h-2zM74 335h2v1h-2zM48 366h1v1h-1zM213 296h1v1h-1zM86 330h1v1h-1zM174 299h1v1h-1zM83 350h1v1h-1zM324 271h1v1h-1zM48 363h1v1h-1zM235 306h2v1h-2zM57 321h1v1h-1zM203 324h1v1h-1zM303 296h2v1h-2zM173 342h1v1h-1zM146 325h1v1h-1zM53 316h1v1h-1zM240 280h1v1h-1zM160 330h1v1h-1zM104 324h1v1h-1zM242 300h1v1h-1zM123 306h1v1h-1zM50 327h1v1h-1zM205 296h1v1h-1zM136 351h2v1h-2zM140 316h1v1h-1zM261 287h1v1h-1zM69 367h1v1h-1zM177 340h1v1h-1zM296 269h2v1h-2zM110 344h1v1h-1zM208 327h1v1h-1zM349 256h2v1h-2zM147 335h1v1h-1zM287 303h1v1h-1zM185 305h1v1h-1zM127 353h1v1h-1zM309 267h1v1h-1zM137 321h1v1h-1zM336 284h1v1h-1zM325 297h2v1h-2zM179 313h2v1h-2zM363 262h1v1h-1zM56 362h2v1h-2zM213 326h1v1h-1zM109 332h2v1h-2zM89 346h1v1h-1zM248 311h2v1h-2zM359 249h1v1h-1zM108 347h2v1h-2zM76 315h1v1h-1zM73 347h1v1h-1zM120 332h1v1h-1zM221 327h1v1h-1zM54 327h1v1h-1zM228 293h1v1h-1zM98 307h1v1h-1zM180 335h1v1h-1zM128 302h1v1h-1zM59 359h1v1h-1zM115 323h1v1h-1zM293 261h1v1h-1zM131 323h1v1h-1zM124 345h1v1h-1zM128 338h1v1h-1zM290 293h1v1h-1zM105 361h1v1h-1zM211 294h1v1h-1zM96 354h1v1h-1zM96 329h1v1h-1zM369 284h1v1h-1zM211 281h1v1h-1zM64 359h2v1h-2zM151 299h1v1h-1zM199 287h1v1h-1zM233 317h1v1h-1zM73 332h1v1h-1zM139 328h1v1h-1zM237 323h2v1h-2zM218 289h1v1h-1zM49 331h1v1h-1zM111 316h1v1h-1zM131 299h1v1h-1zM130 332h1v1h-1zM92 350h1v1h-1zM95 337h1v1h-1zM74 313h1v1h-1zM110 358h1v1h-1zM292 290h1v1h-1zM325 295h1v1h-1zM260 323h1v1h-1zM145 351h1v1h-1zM109 358h1v1h-1zM53 314h1v1h-1zM168 328h1v1h-1zM140 346h1v1h-1zM105 325h1v1h-1zM67 211h1v1h-1zM102 230h1v1h-1zM123 208h2v1h-2zM218 177h1v1h-1zM219 195h1v1h-1zM221 232h2v1h-2zM325 198h2v1h-2zM346 212h1v1h-1zM408 240h1v1h-1zM404 245h1v1h-1zM401 250h1v1h-1zM255 257h1v1h-1zM148 404h1v1h-1zM49 279h1v1h-1zM56 375h1v1h-1zM60 379h1v1h-1zM55 372h1v1h-1zM48 382h2v1h-2zM51 385h2v1h-2z" fill="#f0f082"/>
<path d="M63.5 125V407M81.5 125V407M99.5 125V407M118.5 125V407M136.5 125V407M154.5 125V407M172.5 125V407M191.5 125V407M209.5 125V407M227.5 125V407M245.5 125V407M264.5 125V407M282.5 125V407M300.5 125V407M318.5 125V407M337.5 125V407M355.5 125V407M373.5 125V407M391.5 125V407M46 136.5H410M46 149.5H410M46 162.5H410M46 175.5H410M46 188.5H410M46 201.5H410M46 214.5H410M46 227.5H410M46 240.5H410M46 253.5H410M46 266.5H410M46 278.5H410M46 291.5H410M46 304.5H410M46 317.5H410M46 330.5H410M46 343.5H410M46 356.5H410M46 369.5H410M46 382.5H410M46 395.5H410" stroke="#747474" stroke-width="1" fill="none"/>
<path d="M45.5 408V410M63.5 408V409M81.5 408V410M99.5 408V409M118.5 408V410M136.5 408V409M154.5 408V410M172.5 408V409M191.5 408V410M209.5 408V409M227.5 408V410M245.5 408V409M264.5 408V410M282.5 408V409M300.5 408V410M318.5 408V409M337.5 408V410M355.5 408V409M373.5 408V410M391.5 408V409M410.5 408V410M43 124.5H45M411 124.5H413M44 136.5H45M411 136.5H412M43 149.5H45M411 149.5H413M44 162.5H45M411 162.5H412M43 175.5H45M411 175.5H413M44 188.5H45M411 188.5H412M43 201.5H45M411 201.5H413M44 214.5H45M411 214.5H412M43 227.5H45M411 227.5H413M44 240.5H45M411 240.5H412M43 253.5H45M411 253.5H413M44 266.5H45M411 266.5H412M43 278.5H45M411 278.5H413M44 291.5H45M411 291.5H412M43 304.5H45M411 304.5H413M44 317.5H45M411 317.5H412M43 330.5H45M411 330.5H413M44 343.5H45M411 343.5H412M43 356.5H45M411 356.5H413M44 369.5H45M411 369.5H412M43 382.5H45M411 382.5H413M44 395.5H45M411 395.5H412M43 407.5H45M411 407.5H413" stroke="#1a1a1a" stroke-width="1" fill="none"/>
<path d="M45.5 149.5 L47.0 146.0 L48.7 141.2 L50.0 146.2 L52.0 145.6 L54.4 139.4 L55.6 145.0 L57.0 140.0 L58.7 147.0 L60.6 140.0 L62.0 146.0 L63.0 141.0 L64.4 146.0 L66.0 139.0 L68.0 146.0 L70.0 147.0 L72.5 150.0 L74.4 140.0 L76.2 148.0 L78.7 147.0 L80.6 149.0 L83.0 139.0 L86.5 156.0 L89.0 139.5 L91.2 156.0 L94.6 139.0 L97.0 163.0 L98.0 188.0 L98.6 160.0 L100.6 143.0 L102.0 156.0 L105.0 142.0 L108.0 155.0 L110.6 152.0 L115.0 162.0 L118.7 155.0 L123.0 163.0 L127.5 151.5 L130.0 161.0 L132.5 163.0 L133.5 163.0 L133.6 218.0 L134.8 219.5 L134.9 286.0 L136.1 288.0 L136.3 305.0 L138.3 354.0 L139.5 354.0 L140.5 330.0 L141.0 300.0 L141.0 216.0 L142.7 213.0 L142.7 168.0 L145.6 156.2 L150.0 163.0 L153.0 168.5 L155.6 168.0 L159.4 162.5 L163.0 165.5 L165.6 165.5 L170.0 169.5 L172.0 173.0 L173.7 179.4 L177.0 179.4 L182.5 178.0 L190.0 176.0 L192.5 177.0 L195.6 183.0 L202.5 173.0 L206.2 183.7 L209.4 184.0 L212.0 187.0 L215.6 173.5 L217.5 180.0 L220.6 188.0 L223.7 180.0 L225.6 184.0 L228.7 192.5 L232.2 181.0 L235.6 195.0 L237.5 189.0 L240.0 198.0 L243.0 189.0 L245.0 198.5 L247.5 189.0 L250.6 196.5 L252.5 191.0 L255.0 201.5 L257.5 192.5 L261.2 198.0 L263.0 196.0 L264.2 215.0 L264.8 250.0 L265.6 215.0 L268.0 195.0 L270.0 205.0 L272.5 222.5 L275.0 202.0 L276.0 207.0 L277.5 200.0 L281.2 215.0 L283.7 207.0 L288.0 212.0 L291.2 207.0 L295.6 218.0 L298.7 213.0 L302.5 212.5 L305.3 215.0 L308.3 223.0 L315.0 223.0 L318.8 232.0 L321.8 224.5 L324.8 226.0 L327.5 232.5 L331.6 224.0 L334.6 227.0 L337.0 233.0 L340.0 229.0 L342.5 240.0 L344.4 229.0 L347.4 234.0 L349.0 232.5 L352.7 240.0 L355.7 246.5 L358.0 240.5 L360.2 241.0 L362.5 250.0 L364.8 240.5 L368.5 249.0 L372.3 253.5 L375.3 249.0 L378.3 250.0 L381.3 254.0 L384.3 262.5 L387.3 256.0 L389.6 254.0 L392.6 265.0 L394.0 261.0 L395.6 264.0 L397.9 262.0 L400.2 271.0 L402.4 273.0 L405.4 274.0 L408.4 276.0 L410.0 277.0" stroke="#3aaeec" stroke-width="1.15" fill="none" shape-rendering="geometricPrecision" stroke-linejoin="round"/>
<g font-family="'Liberation Sans',sans-serif" font-size="11px" fill="#111"><text x="40.5" y="385.7" text-anchor="end">5</text><text x="414.6" y="385.7">5</text><text x="40.5" y="359.9" text-anchor="end">10</text><text x="414.6" y="359.9">10</text><text x="40.5" y="334.1" text-anchor="end">15</text><text x="414.6" y="334.1">15</text><text x="40.5" y="308.2" text-anchor="end">20</text><text x="414.6" y="308.2">20</text><text x="40.5" y="282.4" text-anchor="end">25</text><text x="414.6" y="282.4">25</text><text x="40.5" y="256.6" text-anchor="end">30</text><text x="414.6" y="256.6">30</text><text x="40.5" y="230.8" text-anchor="end">35</text><text x="414.6" y="230.8">35</text><text x="40.5" y="205.0" text-anchor="end">40</text><text x="414.6" y="205.0">40</text><text x="40.5" y="179.1" text-anchor="end">45</text><text x="414.6" y="179.1">45</text><text x="40.5" y="153.3" text-anchor="end">50</text><text x="414.6" y="153.3">50</text><text x="40.5" y="127.5" text-anchor="end">55</text><text x="414.6" y="127.5">55</text><text x="45.0" y="419" text-anchor="middle">0</text><text x="81.5" y="419" text-anchor="middle">10</text><text x="118.0" y="419" text-anchor="middle">20</text><text x="154.5" y="419" text-anchor="middle">30</text><text x="191.0" y="419" text-anchor="middle">40</text><text x="227.5" y="419" text-anchor="middle">50</text><text x="264.0" y="419" text-anchor="middle">60</text><text x="300.5" y="419" text-anchor="middle">70</text><text x="337.0" y="419" text-anchor="middle">80</text><text x="373.5" y="419" text-anchor="middle">90</text><text x="410.5" y="419" text-anchor="middle">100%</text><text x="45" y="121">MB/sec</text><text x="411" y="121" text-anchor="end">ms</text></g>
</svg>

<!-- right panel -->
<div id="start" class="abs"></div>
<span class="t" style="left:484px;top:110px;transform:scaleX(.92)">Start</span>
<div id="group" class="abs"></div>
<div class="abs" style="left:447px;top:140px;width:69px;height:14px;background:#fff"></div>
<span class="t" style="left:450px;top:142px;transform:scaleX(.965)">Transfer Rate</span>
<span class="t" style="left:447px;top:159px;transform:scaleX(.92)">Minimum</span>
<div class="abs box" style="top:176px"></div><span class="t val" style="top:176px;left:449px;color:#2aa2e6;transform:scaleX(.985);transform-origin:50% 0">10.5 MB/sec</span>
<span class="t" style="left:447px;top:195px;transform:scaleX(.94)">Maximum</span>
<div class="abs box" style="top:212px"></div><span class="t val" style="top:212px;left:449px;color:#2aa2e6;transform:scaleX(.985);transform-origin:50% 0">51.9 MB/sec</span>
<span class="t" style="left:447px;top:231px;transform:scaleX(.99)">Average:</span>
<div class="abs box" style="top:248px"></div><span class="t val" style="top:248px;left:449px;color:#2aa2e6;transform:scaleX(.985);transform-origin:50% 0">40.7 MB/sec</span>
<span class="t" style="left:447px;top:285px;transform:scaleX(.99)">Access Time:</span>
<div class="abs box" style="top:301px"></div><span class="t val" style="top:301px;left:448px;color:#f0f030;transform:scaleX(.9);transform-origin:50% 0">18.5 ms</span>
<span class="t" style="left:447px;top:333px;transform:scaleX(.96)">Burst Rate</span>
<div class="abs box" style="top:350px"></div><span class="t val" style="top:350px;left:449px;color:#fff;transform:scaleX(.985);transform-origin:50% 0">67.4 MB/sec</span>
<span class="t" style="left:447px;top:379px;transform:scaleX(.96)">CPU Usage</span>
<div class="abs box" style="top:396px"></div><span class="t val" style="top:396px;left:449px;color:#fff;transform:scaleX(.93);transform-origin:50% 0">4.2%</span>
</body></html>
